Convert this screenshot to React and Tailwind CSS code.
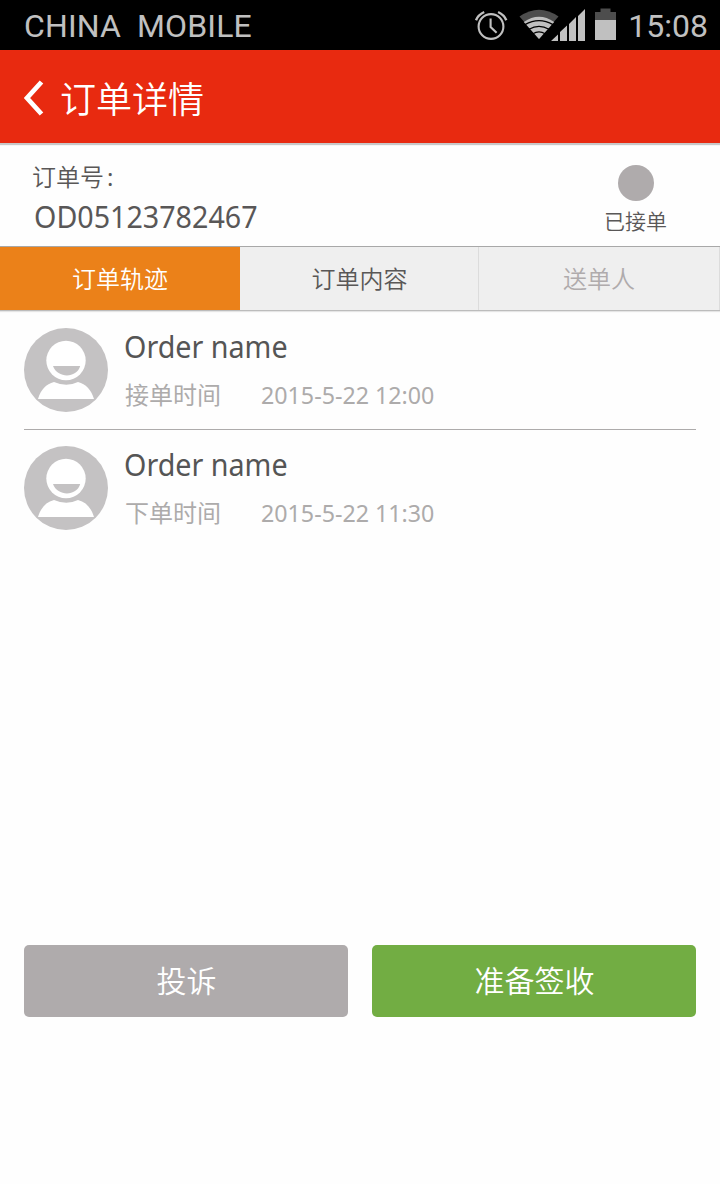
import React from "react";

const tracks = [
  { name: "Order name", label: "接单时间", time: "2015-5-22 12:00" },
  { name: "Order name", label: "下单时间", time: "2015-5-22 11:30" },
];

function StatusIcons() {
  return (
    <svg className="h-[50px] w-[150px] shrink-0" viewBox="470 0 150 50" fill="none">
      <g stroke="#c0c0c0" strokeWidth="2.1">
        <circle cx="491" cy="26.5" r="12.4" />
        <path d="M490.600 18.500v8.500l6 5.700" />
        <path d="M476 20.200q2.200-5.500 8.200-8.200M506.300 20.200q-2.200-5.500-8.200-8.200" strokeWidth="2.400" />
      </g>
      <path d="M519.500 16.500q19.500-13.500 39 0L539 39z" fill="#4d4d4d" />
      <path d="M523.800 22q15.200-10.500 30.400 0L539 39z" fill="#c0c0c0" />
      <path d="M525 24.600q14-7.800 28 0M529 29.200q10-5.600 20 0M532.800 33.700q6.200-3.600 12.400 0" stroke="#000" strokeWidth="1.300" />
      <path d="M549 42L587 6V42z" fill="#000" />
      <path d="M551 41l7-6.500V41zM560 32l7-6.500V41h-7zM569 24l7-7v24h-7zM578 16l7-7v32h-7z" fill="#c0c0c0" />
      <path d="M595 12h5.500V8.500h10V12h5.500v8h-21z" fill="#4d4d4d" />
      <path d="M595 20h21v20h-21z" fill="#c0c0c0" />
    </svg>
  );
}

function Avatar() {
  return (
    <svg className="size-[84px] shrink-0" viewBox="0 0 84 84">
      <circle cx="42" cy="42" r="42" fill="#c4c2c3" />
      <path d="M14 71C17 61.500 22 56 30 54q12.500 5.500 24 0c8 2 13 7.500 16 17z" fill="#fff" />
      <ellipse cx="42" cy="32.500" rx="19.700" ry="19.800" fill="#fff" />
      <path d="M29 38h27.200C52.500 50.600 33.500 50.600 29 38z" fill="#c4c2c3" />
    </svg>
  );
}

function TrackRow({ name, label, time, divided }) {
  return (
    <li className={divided ? "flex h-[118px] gap-4 border-b border-[#adabab] pt-4" : "flex h-[118px] gap-4 pt-4"}>
      <Avatar />
      <div className="whitespace-nowrap pt-px">
        <div className="h-9 origin-left scale-x-[0.956] text-[30px] leading-9 text-[#555]">{name}</div>
        <div className="mt-3 flex h-9 text-2xl leading-9 text-[#adabab]">
          <span className="w-[137px] pl-px">{label}</span>
          <span className="origin-left scale-x-[0.968]">{time}</span>
        </div>
      </div>
    </li>
  );
}

export default function App() {
  return (
    <div className="flex h-[1184px] w-[720px] flex-col overflow-hidden bg-[#fefefe] font-['Noto_Sans','Noto_Sans_CJK_SC',sans-serif]">
      <div className="flex h-[50px] shrink-0 items-center justify-between bg-black pl-6 pr-3 font-['Roboto',sans-serif] text-[32px] text-[#c0c0c0]">
        <span className="whitespace-pre pt-[2px] leading-[48px] tracking-[0.12px]">CHINA  MOBILE</span>
        <div className="flex items-center gap-2">
          <StatusIcons />
          <span className="pt-[2px] leading-[48px]">15:08</span>
        </div>
      </div>

      <header className="flex h-[93px] shrink-0 items-center bg-[#e82a10] pl-6 shadow-[0_2px_1px_#c8c8c8]">
        <svg className="mt-[3px] h-9 w-5" viewBox="0 0 20 36" fill="none">
          <path d="M17.500 2L3 18l14.500 16" stroke="#fff" strokeWidth="4.800" />
        </svg>
        <h1 className="ml-4 pt-[7px] text-4xl leading-[54px] font-[350] text-white">订单详情</h1>
      </header>

      <section className="flex h-[104px] shrink-0 justify-between border-b border-[#a8a8a8] pl-8 pr-[53px] text-[#595757]">
        <div className="pt-4">
          <div className="h-9 text-2xl leading-9 font-[350]">订单号<span className="ml-[3px] font-normal">:</span></div>
          <div className="mt-1 ml-[2px] h-9 origin-left scale-x-[0.955] text-[30px] leading-9">OD05123782467</div>
        </div>
        <div className="flex flex-col items-center pt-[22px]">
          <div className="size-9 rounded-full bg-[#afabac]" />
          <div className="mt-[5px] text-[21px] leading-[30px] font-[350]">已接单</div>
        </div>
      </section>

      <nav className="flex h-[64px] shrink-0 border-b border-[#bcbcbc] bg-[#efefef] text-2xl leading-[63px] font-[350] shadow-[0_1px_1px_#e5e5e5]">
        <button className="w-60 bg-[#eb8119] pt-px leading-[62px] text-white">订单轨迹</button>
        <button className="w-[239px] border-r border-[#dcdcdc] pl-px text-[#595757]">订单内容</button>
        <button className="w-[241px] border-r border-[#dcdcdc] text-[#afabac]">送单人</button>
      </nav>

      <ul className="mx-6 mt-px shrink-0">
        {tracks.map((track, index) => (
          <TrackRow key={track.label} {...track} divided={index === 0} />
        ))}
      </ul>

      <div className="mx-6 mt-auto mb-[167px] grid shrink-0 grid-cols-2 gap-6 text-[30px] leading-[72px] font-[350] text-white">
        <button className="h-[72px] rounded-[5px] bg-[#afabac] pl-px">投诉</button>
        <button className="h-[72px] rounded-[5px] bg-[#72ad43] pl-px">准备签收</button>
      </div>
    </div>
  );
}
